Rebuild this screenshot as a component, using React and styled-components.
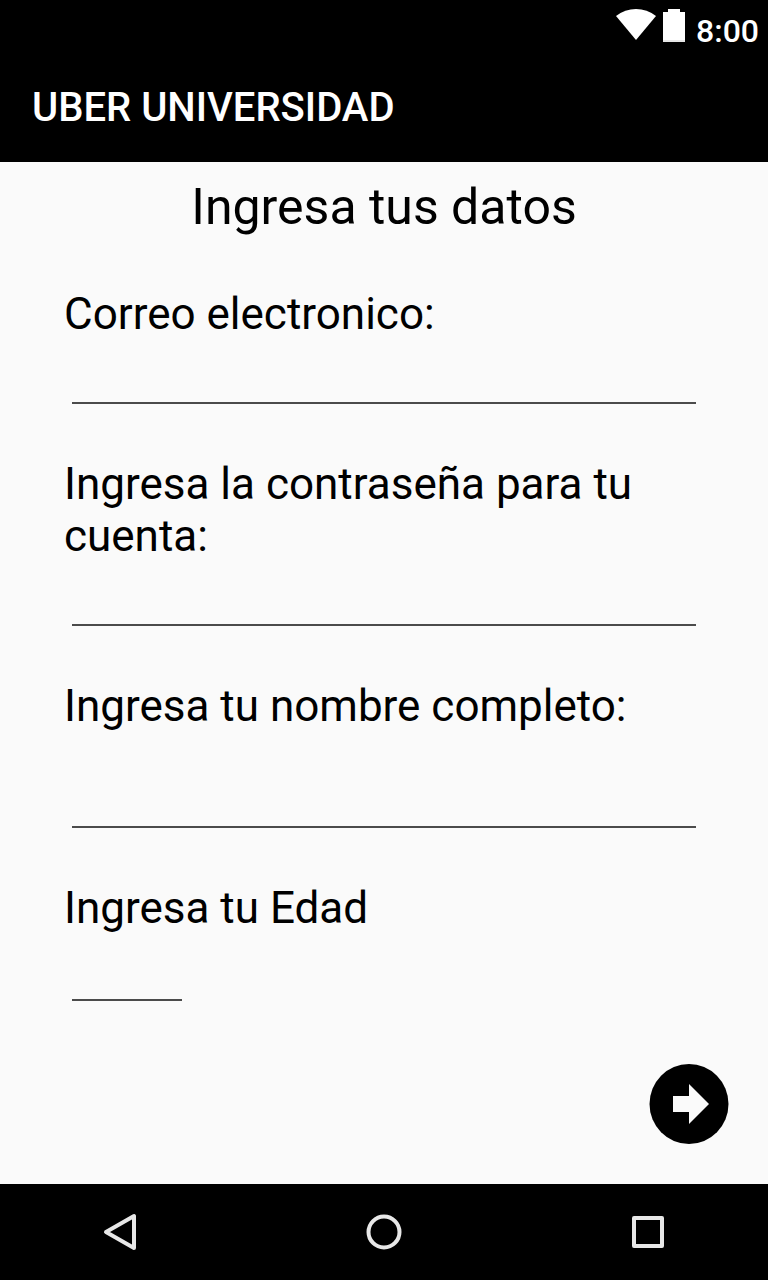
import React from "react";
import styled, { createGlobalStyle } from "styled-components";

const GlobalStyle = createGlobalStyle`
  *, *::before, *::after { box-sizing: border-box; }
  body {
    margin: 0;
    background: #fafafa;
    color: #000;
    font-family: Roboto, "Liberation Sans", sans-serif;
  }
`;

const Screen = styled.div`
  display: flex;
  flex-direction: column;
  min-height: 100vh;
`;

const Header = styled.header`
  background: #000;
  color: #fff;
`;

const StatusBar = styled.div`
  display: flex;
  justify-content: flex-end;
  align-items: flex-start;
  height: 50px;
  padding: 8px 9px 0 0;
`;

const WifiIcon = styled.svg`
  width: 40px;
  height: 34px;
  margin-right: 7px;
`;

const BatteryIcon = styled.svg`
  width: 22px;
  height: 34px;
  margin-right: 11px;
`;

const Clock = styled.time`
  font-size: 32px;
  font-weight: 500;
  line-height: 46px;
`;

const AppBar = styled.div`
  display: flex;
  align-items: center;
  height: 112px;
  padding: 4px 32px 0;
`;

const AppTitle = styled.h1`
  margin: 0;
  font-size: 40px;
  font-weight: 500;
  line-height: 48px;
`;

const Main = styled.main`
  flex: 1;
`;

const Form = styled.form`
  display: flex;
  flex-direction: column;
  padding: 15px 64px 40px;
`;

const Heading = styled.h2`
  margin: 0 0 51px;
  font-size: 50px;
  font-weight: 400;
  line-height: 60px;
  text-align: center;
`;

const Field = styled.div`
  display: flex;
  flex-direction: column;
  margin-bottom: 54px;
`;

const Label = styled.label`
  font-size: 44px;
  line-height: 52px;
`;

const Input = styled.input`
  width: auto;
  height: 64px;
  margin: 0 8px;
  padding: 8px 0;
  border: 0;
  border-bottom: 2px solid #4b4b4b;
  border-radius: 0;
  outline: 0;
  background: transparent;
  color: #000;
  font: 400 36px/44px Roboto, "Liberation Sans", sans-serif;
`;

const TallInput = styled(Input)`
  height: 96px;
  padding-top: 40px;
`;

const ShortInput = styled(Input)`
  width: 110px;
  height: 67px;
`;

const Actions = styled.div`
  display: flex;
  justify-content: flex-end;
  margin: 9px -25px 0 0;
`;

const NextButton = styled.button`
  width: 80px;
  height: 80px;
  padding: 0;
  border: 0;
  border-radius: 50%;
  background: transparent;
  cursor: pointer;

  svg { display: block; }
`;

const NavBar = styled.nav`
  display: flex;
  justify-content: space-between;
  height: 96px;
  padding: 0 80px;
  background: #000;
`;

const NavButton = styled.button`
  display: flex;
  align-items: center;
  justify-content: center;
  width: 80px;
  padding: 0;
  border: 0;
  background: transparent;
  cursor: pointer;
`;

const NavIcon = styled.svg`
  width: 40px;
  height: 40px;
  fill: none;
  stroke: #e8e8e8;
  stroke-width: 4;
  stroke-linejoin: round;
`;

const fields = [
  { id: "correo", label: "Correo electronico:", type: "email", Control: Input },
  { id: "clave", label: "Ingresa la contraseña para tu cuenta:", type: "password", Control: Input },
  { id: "nombre", label: "Ingresa tu nombre completo:", type: "text", Control: TallInput },
  { id: "edad", label: "Ingresa tu Edad", type: "text", Control: ShortInput },
];

export default function App() {
  return (
    <>
      <GlobalStyle />
      <Screen>
        <Header>
          <StatusBar>
            <WifiIcon viewBox="0 0 40 34" aria-hidden="true">
              <path d="M0 8Q9 1 20 1T40 8L20 32Z" fill="#fff" />
            </WifiIcon>
            <BatteryIcon viewBox="0 0 22 34" aria-hidden="true">
              <path d="M5 1H17V4H22V34H0V4H5Z" fill="#fff" />
              <path d="M0 32H22V34H0Z" fill="#e6e6e6" />
            </BatteryIcon>
            <Clock>8:00</Clock>
          </StatusBar>
          <AppBar>
            <AppTitle>UBER UNIVERSIDAD</AppTitle>
          </AppBar>
        </Header>
        <Main>
          <Form onSubmit={(e) => e.preventDefault()}>
            <Heading>Ingresa tus datos</Heading>
            {fields.map(({ id, label, type, Control }) => (
              <Field key={id}>
                <Label htmlFor={id}>{label}</Label>
                <Control id={id} type={type} />
              </Field>
            ))}
            <Actions>
              <NextButton type="submit" aria-label="Siguiente">
                <svg width="80" height="80" viewBox="0 0 80 80" aria-hidden="true">
                  <ellipse cx="40" cy="40" rx="39.5" ry="40" fill="#000" />
                  <path d="M24 32H40V20L60 40L40 60V48H24Z" fill="#fafafa" />
                </svg>
              </NextButton>
            </Actions>
          </Form>
        </Main>
        <NavBar>
          <NavButton type="button" aria-label="Atrás">
            <NavIcon viewBox="0 0 40 40"><path d="M34 4V36L6 20Z" /></NavIcon>
          </NavButton>
          <NavButton type="button" aria-label="Inicio">
            <NavIcon viewBox="0 0 40 40"><circle cx="20" cy="20" r="15.5" /></NavIcon>
          </NavButton>
          <NavButton type="button" aria-label="Recientes">
            <NavIcon viewBox="0 0 40 40"><path d="M6 6H34V34H6Z" /></NavIcon>
          </NavButton>
        </NavBar>
      </Screen>
    </>
  );
}
